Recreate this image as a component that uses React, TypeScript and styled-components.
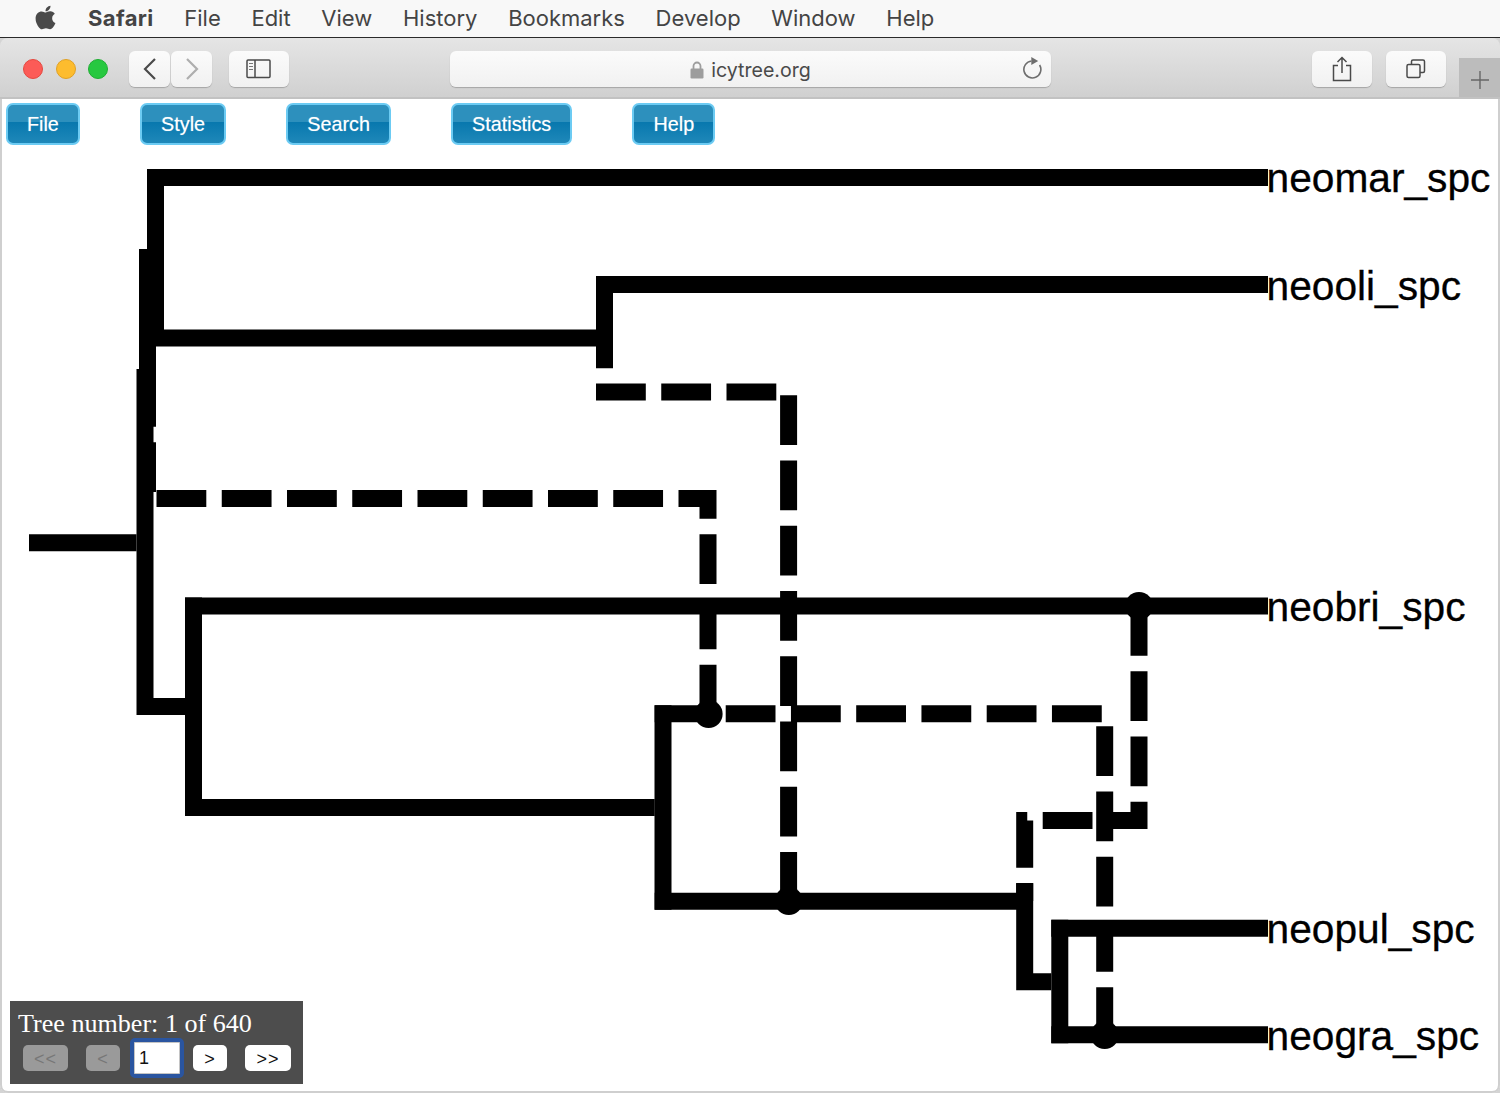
import styled, { createGlobalStyle } from "styled-components";
import { FaApple } from "react-icons/fa";

const menuItems = ["File", "Edit", "View", "History", "Bookmarks", "Develop", "Window", "Help"];
const appButtons = ["File", "Style", "Search", "Statistics", "Help"];

const solidEdges = [
  "M147 177.5 H1268",
  "M155.5 169 V346",
  "M139 338 H596",
  "M604.5 276 V368.3",
  "M596 284.5 H1268",
  "M147.5 249 V377",
  "M145 369 V706.5 H185",
  "M29 542.7 H136.5",
  "M193.5 597.5 V807.5",
  "M185 606 H1268",
  "M185 807.5 H654.7",
  "M663 705.3 V909.7",
  "M654.7 713.8 H708",
  "M654.7 901.2 H1024.7",
  "M1024.7 883 V981.8 H1051.3",
  "M1059.8 919.7 V1043.3",
  "M1051.3 928.2 H1268",
  "M1051.3 1034.8 H1268",
];

const dashedEdges = [
  "M147.5 377 V498.5 H708 V714",
  "M596 392 H788.6 V901",
  "M725.7 713.8 H1104.7 V1035",
  "M1139 606 V820.5 H1024.7 V901",
];

const nodes = [
  { x: 708.6, y: 714 },
  { x: 788.8, y: 901 },
  { x: 1104.7, y: 1035 },
  { x: 1139, y: 606 },
];

const leaves = [
  { name: "neomar_spc", y: 192 },
  { name: "neooli_spc", y: 300 },
  { name: "neobri_spc", y: 621 },
  { name: "neopul_spc", y: 943 },
  { name: "neogra_spc", y: 1050 },
];

export default function App() {
  return (
    <>
      <GlobalStyle />
      <MenuBar>
        <AppleMark>
          <FaApple size={27} />
        </AppleMark>
        <AppName>Safari</AppName>
        {menuItems.map((item) => (
          <span key={item}>{item}</span>
        ))}
      </MenuBar>
      <BrowserWindow>
        <Toolbar>
          <TrafficLights>
            <Light color="#fc5b57" edge="#e5483f" />
            <Light color="#fdbc2e" edge="#e0a125" />
            <Light color="#27c840" edge="#1fae33" />
          </TrafficLights>
          <NavGroup>
            <ToolButton width={41}>
              <svg width="14" height="22" viewBox="0 0 14 22" fill="none" stroke="#4a4a4a" strokeWidth="2.2">
                <path d="M12 1 L2 11 L12 21" />
              </svg>
            </ToolButton>
            <ToolButton width={41}>
              <svg width="14" height="22" viewBox="0 0 14 22" fill="none" stroke="#aeaeae" strokeWidth="2.2">
                <path d="M2 1 L12 11 L2 21" />
              </svg>
            </ToolButton>
          </NavGroup>
          <SidebarSlot>
            <ToolButton width={60}>
              <svg width="26" height="20" viewBox="0 0 26 20" fill="none" stroke="#4a4a4a" strokeWidth="1.5">
                <rect x="1" y="1" width="23" height="17.5" rx="1" />
                <path d="M9 1 V18.5" />
                <path d="M3 4.5 H7 M3 7.5 H7 M3 10.5 H7" strokeWidth="1" stroke="#777" />
              </svg>
            </ToolButton>
          </SidebarSlot>
          <AddressBar>
            <svg width="14" height="18" viewBox="0 0 14 18">
              <path d="M3.5 8 V5 a3.5 3.5 0 0 1 7 0 V8" fill="none" stroke="#9d9d9d" strokeWidth="1.8" />
              <rect x="0.5" y="7.5" width="13" height="10" rx="1.2" fill="#9d9d9d" />
            </svg>
            <span>icytree.org</span>
            <ReloadIcon width="20" height="24" viewBox="0 0 20 24" fill="none">
              <path d="M9.5 6 A8.5 8.5 0 1 0 17.6 10" stroke="#6e6e6e" strokeWidth="1.6" />
              <path d="M9.3 2 L16.2 6 L9.3 10 Z" fill="#6e6e6e" />
            </ReloadIcon>
          </AddressBar>
          <RightTools>
            <ToolButton width={60}>
              <svg width="20" height="26" viewBox="0 0 20 26" fill="none" stroke="#4a4a4a" strokeWidth="1.5">
                <path d="M6 9.5 H1.5 V24.5 H18.5 V9.5 H14" />
                <path d="M10 17 V1.5 M5.5 6 L10 1.5 L14.5 6" />
              </svg>
            </ToolButton>
            <ToolButton width={60}>
              <svg width="20" height="20" viewBox="0 0 20 20" fill="none" stroke="#4a4a4a" strokeWidth="1.5">
                <rect x="1" y="5.5" width="13" height="13" rx="1.5" />
                <path d="M5.5 5.5 V2.5 a1.5 1.5 0 0 1 1.5 -1.5 H17 a1.5 1.5 0 0 1 1.5 1.5 V12 a1.5 1.5 0 0 1 -1.5 1.5 H14" />
              </svg>
            </ToolButton>
          </RightTools>
          <NewTab>
            <svg width="18" height="18" viewBox="0 0 18 18" stroke="#666" strokeWidth="1.4">
              <path d="M9 0 V18 M0 9 H18" />
            </svg>
          </NewTab>
        </Toolbar>
        <Canvas>
          <AppMenu>
            {appButtons.map((label) => (
              <AppButton key={label}>{label}</AppButton>
            ))}
          </AppMenu>
          <TreeSvg viewBox="0 150 1500 943">
            <g fill="none" stroke="#000" strokeWidth="17">
              {solidEdges.map((d) => (
                <path key={d} d={d} />
              ))}
              {dashedEdges.map((d) => (
                <path key={d} d={d} strokeDasharray="49.8 15.45" />
              ))}
            </g>
            {nodes.map((n) => (
              <circle key={n.x} cx={n.x} cy={n.y} r="14" fill="#000" />
            ))}
            {leaves.map((leaf) => (
              <LeafLabel key={leaf.name} x="1266.5" y={leaf.y}>
                {leaf.name}
              </LeafLabel>
            ))}
          </TreeSvg>
          <TreePanel>
            <PanelTitle>Tree number: 1 of 640</PanelTitle>
            <PanelControls>
              <PagerButton disabled width={45}>
                {"<<"}
              </PagerButton>
              <PagerButton disabled width={34} gap={18}>
                {"<"}
              </PagerButton>
              <PagerInput defaultValue="1" />
              <PagerButton width={34} gap={9}>
                {">"}
              </PagerButton>
              <PagerButton width={46} gap={18}>
                {">>"}
              </PagerButton>
            </PanelControls>
          </TreePanel>
        </Canvas>
      </BrowserWindow>
    </>
  );
}

const GlobalStyle = createGlobalStyle`
  html, body {
    margin: 0;
    padding: 0;
    height: 100%;
    overflow: hidden;
    background: #d4d4d4;
  }
  * {
    box-sizing: border-box;
  }
`;

const MenuBar = styled.div`
  height: 38px;
  display: flex;
  align-items: center;
  gap: 30.7px;
  padding: 0 0 2px 34px;
  background: #f8f8f8;
  border-bottom: 1px solid #2a2a2a;
  font-family: "Inter", "Liberation Sans", sans-serif;
  font-size: 22px;
  color: #444;
`;

const AppleMark = styled.div`
  display: flex;
  width: 23px;
  margin-right: 0.4px;
  margin-bottom: 1px;
  color: #4a4a4a;
`;

const AppName = styled.span`
  font-weight: 700;
  letter-spacing: 0.35px;
`;

const BrowserWindow = styled.div`
  height: 1055px;
  display: flex;
  flex-direction: column;
  border-radius: 8px;
  overflow: hidden;
`;

const Toolbar = styled.div`
  height: 61px;
  flex: none;
  display: flex;
  align-items: flex-start;
  padding: 13px 0 0 23px;
  background: linear-gradient(#e5e5e5, #d0d0d0);
  border-bottom: 2px solid #c2c2c2;
`;

const TrafficLights = styled.div`
  display: flex;
  gap: 12.5px;
  margin-top: 8px;
`;

const Light = styled.div<{ color: string; edge: string }>`
  width: 20px;
  height: 20px;
  border-radius: 50%;
  background: ${(p) => p.color};
  border: 1px solid ${(p) => p.edge};
`;

const NavGroup = styled.div`
  display: flex;
  gap: 1px;
  margin-left: 21px;
`;

const SidebarSlot = styled.div`
  margin-left: 17px;
`;

const ToolButton = styled.div<{ width: number }>`
  width: ${(p) => p.width}px;
  height: 36px;
  display: flex;
  align-items: center;
  justify-content: center;
  background: linear-gradient(#fbfbfb, #f1f1f1);
  border-radius: 6px;
  box-shadow: 0 1px 1px rgba(0, 0, 0, 0.22);
`;

const AddressBar = styled.div`
  position: relative;
  width: 601px;
  height: 36px;
  margin-left: 161px;
  padding-top: 1px;
  display: flex;
  align-items: center;
  justify-content: center;
  gap: 7px;
  background: linear-gradient(#fbfbfb, #f1f1f1);
  border-radius: 6px;
  box-shadow: 0 1px 1px rgba(0, 0, 0, 0.22);
  font-family: "Inter", "Liberation Sans", sans-serif;
  font-size: 19.6px;
  color: #4a4a4a;
`;

const ReloadIcon = styled.svg`
  position: absolute;
  right: 9px;
  top: 4px;
`;

const RightTools = styled.div`
  display: flex;
  gap: 14px;
  margin-left: 261px;
`;

const NewTab = styled.div`
  width: 41px;
  height: 39px;
  margin: 7px 0 0 13px;
  display: flex;
  align-items: center;
  justify-content: center;
  padding-top: 4px;
  background: #bcbcbc;
`;

const Canvas = styled.div`
  position: relative;
  flex: 1;
  display: flex;
  flex-direction: column;
  background: #fff;
  border-radius: 0 0 8px 8px;
  box-shadow: inset 2px 0 0 #cfcfcf, inset -2px 0 0 #cfcfcf, inset 0 -2px 0 #cfcfcf;
`;

const AppMenu = styled.div`
  height: 51px;
  flex: none;
  display: flex;
  align-items: flex-start;
  gap: 60.2px;
  padding: 4px 0 0 6px;
`;

const AppButton = styled.div`
  height: 42px;
  padding: 0 19px;
  display: flex;
  align-items: center;
  border: 2px solid #6ccbf3;
  border-radius: 7px;
  background: linear-gradient(#2d90bd 0 46%, #0878ae 46%, #1f88b9 100%);
  font-family: "Liberation Sans", sans-serif;
  font-size: 19.8px;
  color: #fff;
  text-shadow: 0 0 1px rgba(255, 255, 255, 0.5);
`;

const TreeSvg = styled.svg`
  display: block;
  width: 1500px;
  height: 943px;
  flex: none;
`;

const LeafLabel = styled.text`
  font-family: "Liberation Sans", sans-serif;
  font-size: 40.7px;
  fill: #000;
  stroke: #000;
  stroke-width: 0.3px;
`;

const TreePanel = styled.div`
  position: absolute;
  left: 10px;
  bottom: 9px;
  width: 293px;
  height: 83px;
  padding: 7px 0 0 8px;
  background: #4d4d4d;
`;

const PanelTitle = styled.div`
  font-family: "Liberation Serif", serif;
  font-size: 26.1px;
  line-height: 32px;
  color: #fff;
`;

const PanelControls = styled.div`
  display: flex;
  align-items: center;
  margin-top: -2px;
  padding-left: 5px;
`;

const PagerButton = styled.button<{ width: number; gap?: number }>`
  width: ${(p) => p.width}px;
  height: 26px;
  margin-left: ${(p) => p.gap ?? 0}px;
  padding: 2px 0 0;
  border: none;
  border-radius: 5px;
  background: #fff;
  font-family: "Liberation Sans", sans-serif;
  font-size: 18px;
  letter-spacing: 1px;
  color: #111;
  &:disabled {
    background: #9a9a9a;
    color: #777;
  }
`;

const PagerInput = styled.input`
  width: 54px;
  height: 40px;
  margin-left: 10px;
  padding: 1px 0 0 5px;
  border: 4px solid #2a55a0;
  border-radius: 5px;
  background: #fff;
  outline: none;
  box-shadow: inset 0 0 0 1px #c4c4c4;
  font-family: "Liberation Sans", sans-serif;
  font-size: 18px;
  color: #111;
`;
